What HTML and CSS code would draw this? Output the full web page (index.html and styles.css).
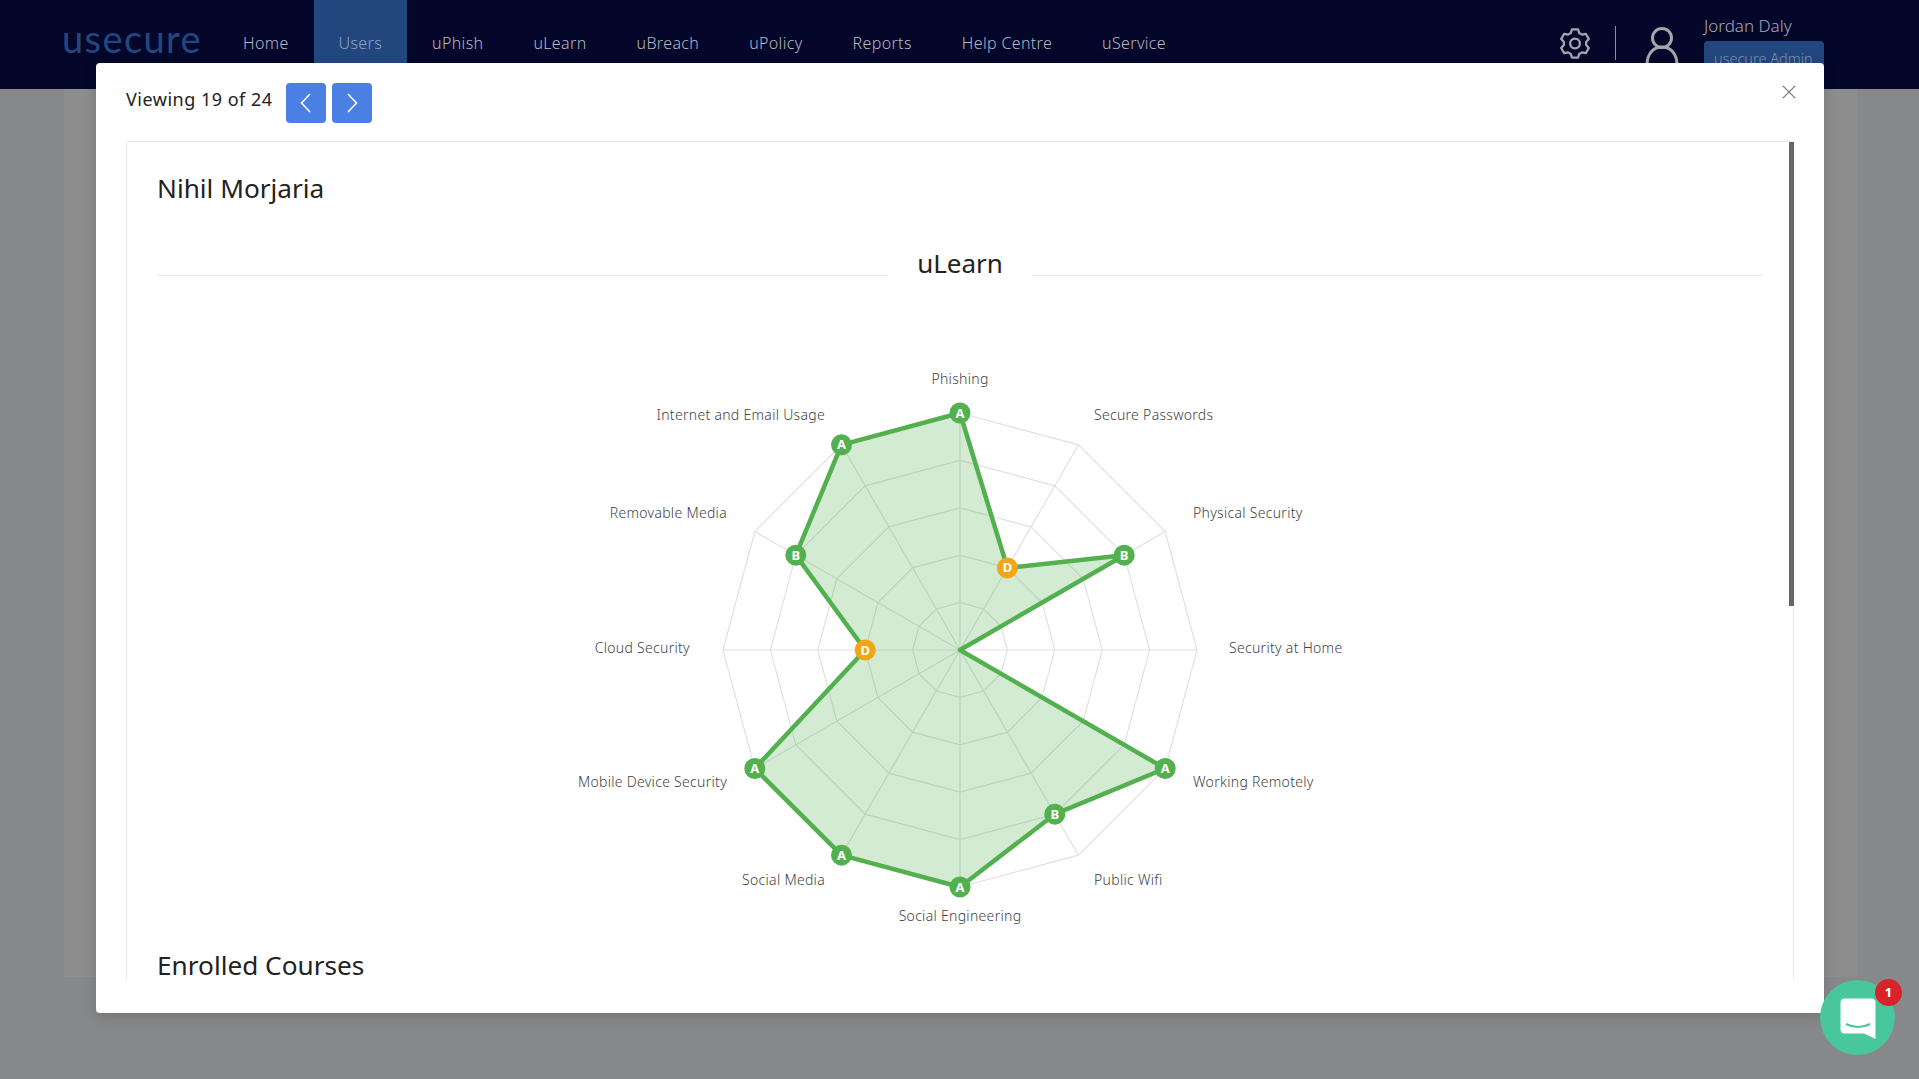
FILE: index.html
```html
<!DOCTYPE html>
<html lang="en">
<head>
    <meta charset="UTF-8">
    <title>Nihil Morjaria - usecure</title>
    <link rel="stylesheet" href="styles.css">
</head>
<body>

    <header class="topbar">
        <div class="logo">usecure</div>
        <nav class="nav">
            <a class="nav-item">Home</a>
            <a class="nav-item active">Users</a>
            <a class="nav-item">uPhish</a>
            <a class="nav-item">uLearn</a>
            <a class="nav-item">uBreach</a>
            <a class="nav-item">uPolicy</a>
            <a class="nav-item">Reports</a>
            <a class="nav-item">Help Centre</a>
            <a class="nav-item">uService</a>
        </nav>
        <div class="account">
            <svg class="gear" viewBox="0 0 32 32">
                <polygon points="12.78,.84 19.22,.84 20.5,4.87 23.39,6.54 27.52,5.63 30.74,11.21 27.88,14.33 27.88,17.67 30.74,20.79 27.52,26.37 23.39,25.46 20.5,27.13 19.22,31.16 12.78,31.16 11.5,27.13 8.61,25.46 4.48,26.37 1.26,20.79 4.12,17.67 4.12,14.33 1.26,11.21 4.48,5.63 8.61,6.54 11.5,4.87"/>
                <circle cx="16" cy="16" r="5.2"/>
            </svg>
            <span class="account-sep"></span>
            <svg class="avatar" viewBox="0 0 34 40">
                <circle cx="17" cy="11" r="9.5"/>
                <path d="M2 38 C2 26 9 20 17 20 C25 20 32 26 32 38"/>
            </svg>
            <div class="account-info">
                <div class="account-name">Jordan Daly</div>
                <div class="account-role">usecure Admin</div>
            </div>
        </div>
    </header>

    <main class="page">
        <div class="page-panel"></div>
    </main>

    <section class="modal">
        <div class="modal-head">
            <span class="viewing">Viewing 19 of 24</span>
            <button class="page-btn">
                <svg viewBox="0 0 16 24"><path d="M12 3 L3.5 12 L12 21"/></svg>
            </button>
            <button class="page-btn">
                <svg viewBox="0 0 16 24"><path d="M4 3 L12.5 12 L4 21"/></svg>
            </button>
        </div>
        <svg class="close" viewBox="0 0 16 16"><path d="M1 1 L15 15 M15 1 L1 15"/></svg>

        <div class="modal-body">
            <div class="card">
                <h2 class="title">Nihil Morjaria</h2>
                <div class="divider"><span>uLearn</span></div>

                <svg class="radar" viewBox="-400 -300 800 590">
                    <g class="grid">
                        <polygon points="0,-237 118.5,-205.2 205.2,-118.5 237,0 205.2,118.5 118.5,205.2 0,237 -118.5,205.2 -205.2,118.5 -237,0 -205.2,-118.5 -118.5,-205.2"/>
                        <polygon points="0,-189.6 94.8,-164.2 164.2,-94.8 189.6,0 164.2,94.8 94.8,164.2 0,189.6 -94.8,164.2 -164.2,94.8 -189.6,0 -164.2,-94.8 -94.8,-164.2"/>
                        <polygon points="0,-142.2 71.1,-123.2 123.2,-71.1 142.2,0 123.2,71.1 71.1,123.2 0,142.2 -71.1,123.2 -123.2,71.1 -142.2,0 -123.2,-71.1 -71.1,-123.2"/>
                        <polygon points="0,-94.8 47.4,-82.1 82.1,-47.4 94.8,0 82.1,47.4 47.4,82.1 0,94.8 -47.4,82.1 -82.1,47.4 -94.8,0 -82.1,-47.4 -47.4,-82.1"/>
                        <polygon points="0,-47.4 23.7,-41 41,-23.7 47.4,0 41,23.7 23.7,41 0,47.4 -23.7,41 -41,23.7 -47.4,0 -41,-23.7 -23.7,-41"/>
                        <path d="M0 0 L0 -237 M0 0 L118.5 -205.2 M0 0 L205.2 -118.5 M0 0 L237 0 M0 0 L205.2 118.5 M0 0 L118.5 205.2 M0 0 L0 237 M0 0 L-118.5 205.2 M0 0 L-205.2 118.5 M0 0 L-237 0 M0 0 L-205.2 -118.5 M0 0 L-118.5 -205.2"/>
                    </g>

                    <polygon class="area" points="0,-237 47.4,-82.1 164.2,-94.8 0,0 205.2,118.5 94.8,164.2 0,237 -118.5,205.2 -205.2,118.5 -94.8,0 -164.2,-94.8 -118.5,-205.2"/>

                    <g class="labels">
                        <text x="0" y="-266" text-anchor="middle">Phishing</text>
                        <text x="134" y="-230">Secure Passwords</text>
                        <text x="233" y="-132">Physical Security</text>
                        <text x="269" y="3">Security at Home</text>
                        <text x="233" y="137">Working Remotely</text>
                        <text x="134" y="235">Public Wifi</text>
                        <text x="0" y="271" text-anchor="middle">Social Engineering</text>
                        <text x="-135" y="235" text-anchor="end">Social Media</text>
                        <text x="-233" y="137" text-anchor="end">Mobile Device Security</text>
                        <text x="-270" y="3" text-anchor="end">Cloud Security</text>
                        <text x="-233" y="-132" text-anchor="end">Removable Media</text>
                        <text x="-135" y="-230" text-anchor="end">Internet and Email Usage</text>
                    </g>

                    <g class="grade">
                        <circle cx="0" cy="-237" r="10.5"/><text x="0" y="-232.5">A</text>
                        <circle cx="164.2" cy="-94.8" r="10.5"/><text x="164.2" y="-90.3">B</text>
                        <circle cx="205.2" cy="118.5" r="10.5"/><text x="205.2" y="123">A</text>
                        <circle cx="94.8" cy="164.2" r="10.5"/><text x="94.8" y="168.7">B</text>
                        <circle cx="0" cy="237" r="10.5"/><text x="0" y="241.5">A</text>
                        <circle cx="-118.5" cy="205.2" r="10.5"/><text x="-118.5" y="209.7">A</text>
                        <circle cx="-205.2" cy="118.5" r="10.5"/><text x="-205.2" y="123">A</text>
                        <circle cx="-164.2" cy="-94.8" r="10.5"/><text x="-164.2" y="-90.3">B</text>
                        <circle cx="-118.5" cy="-205.2" r="10.5"/><text x="-118.5" y="-200.7">A</text>
                    </g>
                    <g class="grade low">
                        <circle cx="47.4" cy="-82.1" r="10.5"/><text x="47.4" y="-77.6">D</text>
                        <circle cx="-94.8" cy="0" r="10.5"/><text x="-94.8" y="4.5">D</text>
                    </g>
                </svg>

                <h2 class="title">Enrolled Courses</h2>
            </div>
            <div class="scrollbar"></div>
        </div>
    </section>

    <div class="chat">
        <svg viewBox="0 0 75 75">
            <path class="chat-bubble" d="M24.5 18.5 H51.5 Q55.5 18.5 55.5 22.5 V59 L44 53.5 H24.5 Q20.5 53.5 20.5 49.5 V22.5 Q20.5 18.5 24.5 18.5 Z"/>
            <path class="chat-smile" d="M26 44 Q38 50 50 44"/>
        </svg>
        <span class="chat-badge">1</span>
    </div>

</body>
</html>
```

FILE: styles.css
```css
body {
    margin: 0;
    height: 1079px;
    overflow: hidden;
    position: relative;
    font-family: "Noto Sans", Arial, sans-serif;
    background-color: #87888a;
    color: #222;
}

.topbar {
    height: 89px;
    display: flex;
    padding: 0 95px 0 62px;
    background-color: #05072a;
}

.logo {
    width: 156px;
    font-family: "Lato", sans-serif;
    font-size: 38px;
    line-height: 76px;
    color: #22477f;
    letter-spacing: 1.4px;
}

.nav {
    display: flex;
    flex: 1;
}

.nav-item {
    padding: 30px 25px 0;
    font-size: 16px;
    line-height: 26px;
    font-weight: 300;
    letter-spacing: 0.35px;
    color: #b4b6c2;
}

.nav-item.active {
    background-color: #22477f;
    color: #8fa2c2;
}

.account {
    display: flex;
    align-items: flex-start;
}

.gear {
    width: 30px;
    height: 33px;
    margin: 27px 25px 0 0;
    fill: none;
    stroke: #a5a7ad;
    stroke-width: 2.4;
    stroke-linejoin: round;
}

.account-sep {
    width: 1px;
    height: 34px;
    margin: 26px 29px 0 0;
    background-color: #8d8f9b;
}

.avatar {
    width: 34px;
    height: 40px;
    margin: 27px 25px 0 0;
    fill: none;
    stroke: #a5a7ad;
    stroke-width: 3;
}

.account-info {
    width: 120px;
    padding-top: 14px;
}

.account-name {
    font-size: 17px;
    line-height: 24px;
    font-weight: 300;
    color: #a5a7b5;
}

.account-role {
    margin-top: 3px;
    padding: 6px 10px;
    border-radius: 4px;
    background-color: #22477f;
    color: #7f93b5;
    font-size: 14.5px;
    line-height: 22px;
    font-weight: 300;
    white-space: nowrap;
}

/* dimmed page behind the modal */
.page {
    padding: 0 62px 0 64px;
}

.page-panel {
    height: 888px;
    background-color: #8d8d8d;
}

.modal {
    position: absolute;
    left: 96px;
    top: 63px;
    width: 1728px;
    height: 950px;
    box-sizing: border-box;
    padding: 20px 30px 0;
    background-color: white;
    border-radius: 4px;
    box-shadow: 0 4px 14px rgba(0, 0, 0, 0.15);
}

.modal-head {
    display: flex;
    gap: 6px;
    height: 40px;
    margin-bottom: 18px;
}

.viewing {
    width: 154px;
    font-size: 18px;
    line-height: 32px;
    font-weight: 400;
    letter-spacing: 0.5px;
}

.page-btn {
    width: 40px;
    height: 40px;
    padding: 0;
    border: none;
    border-radius: 4px;
    background-color: #4a7fe3;
}

.page-btn svg {
    display: block;
    width: 16px;
    height: 24px;
    margin: auto;
    fill: none;
    stroke: white;
    stroke-width: 1.6;
}

.close {
    position: absolute;
    right: 28px;
    top: 22px;
    width: 14px;
    height: 14px;
    fill: none;
    stroke: #777;
    stroke-width: 1.5;
}

.modal-body {
    position: relative;
}

.card {
    box-sizing: border-box;
    height: 839px;
    padding: 32px 30px 0;
    border: 1px solid #e8e8e8;
    border-bottom: none;
    border-radius: 2px 2px 0 0;
}

.title {
    margin: 0;
    font-size: 26.2px;
    line-height: 28px;
    font-weight: 400;
    color: #222;
}

.divider {
    display: flex;
    gap: 29px;
    height: 32px;
    margin-top: 45px;
    font-size: 26px;
    line-height: 32px;
    color: #222;
}

.divider::before,
.divider::after {
    content: "";
    flex: 1;
    height: 1px;
    margin-top: 28px;
    background-color: #e8e8e8;
}

.radar {
    display: block;
    width: 800px;
    height: 590px;
    margin: 71px auto 11px;
}

.grid polygon,
.grid path {
    fill: none;
    stroke: #e1e1e1;
    stroke-width: 1.2;
}

.area {
    fill: rgba(80, 176, 80, 0.25);
    stroke: #53b04f;
    stroke-width: 4.5;
    stroke-linejoin: round;
}

.labels text {
    font-size: 14px;
    font-weight: 300;
    letter-spacing: 0.3px;
    fill: #3f3f3f;
}

.grade circle {
    fill: #53b04f;
}

.grade text {
    font-size: 13px;
    font-weight: 700;
    fill: white;
    text-anchor: middle;
}

.grade.low circle {
    fill: #f2a516;
}

.scrollbar {
    position: absolute;
    right: 0;
    top: 1px;
    width: 5px;
    height: 464px;
    background-color: #666;
}

.chat {
    position: absolute;
    left: 1820px;
    top: 980px;
    width: 75px;
    height: 75px;
    border-radius: 50%;
    background-color: #48c79c;
}

.chat svg {
    display: block;
}

.chat-bubble {
    fill: white;
}

.chat-smile {
    fill: none;
    stroke: #48c79c;
    stroke-width: 2;
}

.chat-badge {
    position: absolute;
    left: 55px;
    top: -1px;
    width: 27px;
    height: 27px;
    border-radius: 50%;
    background-color: #d9232b;
    color: white;
    font-size: 13px;
    font-weight: 700;
    line-height: 27px;
    text-align: center;
}
```
